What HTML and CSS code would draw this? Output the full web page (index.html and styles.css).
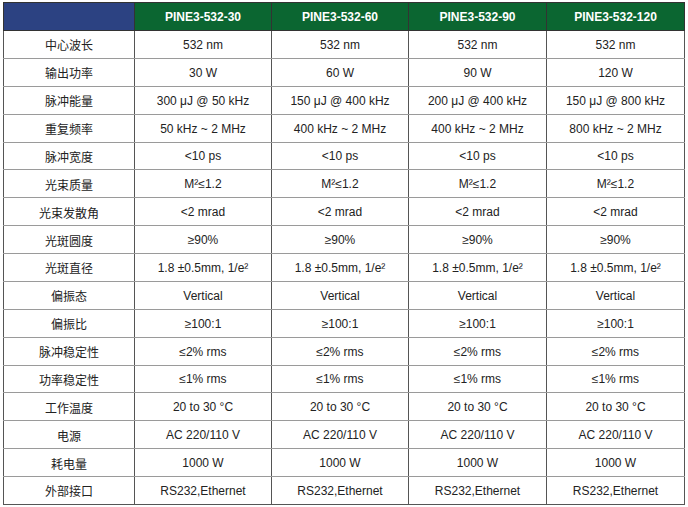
FILE: index.html
```html
<!DOCTYPE html>
<html lang="zh">
<head>
<meta charset="utf-8">
<link rel="stylesheet" href="styles.css">
</head>
<body>
<table class="spec">
  <colgroup>
    <col class="c0"><col class="c1"><col class="c2"><col class="c3"><col class="c4">
  </colgroup>
  <thead>
    <tr>
      <th class="corner"></th>
      <th>PINE3-532-30</th>
      <th>PINE3-532-60</th>
      <th>PINE3-532-90</th>
      <th>PINE3-532-120</th>
    </tr>
  </thead>
  <tbody>
    <tr><td class="lbl">中心波长</td><td>532 nm</td><td>532 nm</td><td>532 nm</td><td>532 nm</td></tr>
    <tr><td class="lbl">输出功率</td><td>30 W</td><td>60 W</td><td>90 W</td><td>120 W</td></tr>
    <tr><td class="lbl">脉冲能量</td><td>300 μJ @ 50 kHz</td><td>150 μJ @ 400 kHz</td><td>200 μJ @ 400 kHz</td><td>150 μJ @ 800 kHz</td></tr>
    <tr><td class="lbl">重复频率</td><td>50 kHz ~ 2 MHz</td><td>400 kHz ~ 2 MHz</td><td>400 kHz ~ 2 MHz</td><td>800 kHz ~ 2 MHz</td></tr>
    <tr><td class="lbl">脉冲宽度</td><td>&lt;10 ps</td><td>&lt;10 ps</td><td>&lt;10 ps</td><td>&lt;10 ps</td></tr>
    <tr><td class="lbl">光束质量</td><td>M²≤1.2</td><td>M²≤1.2</td><td>M²≤1.2</td><td>M²≤1.2</td></tr>
    <tr><td class="lbl">光束发散角</td><td>&lt;2 mrad</td><td>&lt;2 mrad</td><td>&lt;2 mrad</td><td>&lt;2 mrad</td></tr>
    <tr><td class="lbl">光斑圆度</td><td>≥90%</td><td>≥90%</td><td>≥90%</td><td>≥90%</td></tr>
    <tr><td class="lbl">光斑直径</td><td>1.8 ±0.5mm, 1/e²</td><td>1.8 ±0.5mm, 1/e²</td><td>1.8 ±0.5mm, 1/e²</td><td>1.8 ±0.5mm, 1/e²</td></tr>
    <tr><td class="lbl">偏振态</td><td>Vertical</td><td>Vertical</td><td>Vertical</td><td>Vertical</td></tr>
    <tr><td class="lbl">偏振比</td><td>≥100:1</td><td>≥100:1</td><td>≥100:1</td><td>≥100:1</td></tr>
    <tr><td class="lbl">脉冲稳定性</td><td>≤2% rms</td><td>≤2% rms</td><td>≤2% rms</td><td>≤2% rms</td></tr>
    <tr><td class="lbl">功率稳定性</td><td>≤1% rms</td><td>≤1% rms</td><td>≤1% rms</td><td>≤1% rms</td></tr>
    <tr><td class="lbl">工作温度</td><td>20 to 30 °C</td><td>20 to 30 °C</td><td>20 to 30 °C</td><td>20 to 30 °C</td></tr>
    <tr><td class="lbl">电源</td><td>AC 220/110 V</td><td>AC 220/110 V</td><td>AC 220/110 V</td><td>AC 220/110 V</td></tr>
    <tr><td class="lbl">耗电量</td><td>1000 W</td><td>1000 W</td><td>1000 W</td><td>1000 W</td></tr>
    <tr><td class="lbl">外部接口</td><td>RS232,Ethernet</td><td>RS232,Ethernet</td><td>RS232,Ethernet</td><td>RS232,Ethernet</td></tr>
  </tbody>
</table>
</body>
</html>
```

FILE: styles.css
```css
html, body {
  margin: 0;
  padding: 0;
  background: #ffffff;
}
body {
  padding: 2px 0 0 3px;
  font-family: "Liberation Sans", Arial, "Noto Sans CJK SC", sans-serif;
  color: #222222;
}
.spec {
  border-collapse: collapse;
  table-layout: fixed;
  width: 681px;
}
.c0 { width: 131px; }
.c1 { width: 137px; }
.c2 { width: 137px; }
.c3 { width: 138px; }
.c4 { width: 138px; }
.spec th {
  height: 27px;
  padding: 0;
  background: #0b6631;
  color: #ffffff;
  font-size: 12px;
  font-weight: bold;
  text-align: center;
  vertical-align: middle;
  border: 1px solid #333333;
}
.spec th.corner {
  background: #2c4282;
}
.spec td {
  height: 25.88px;
  padding: 1px 0 0 0;
  font-size: 12px;
  text-align: center;
  vertical-align: middle;
  border-top: 1px solid #9a9a9a;
  border-bottom: 1px solid #9a9a9a;
  border-left: 1px solid #555555;
  border-right: 1px solid #555555;
}
.spec td.lbl {
  font-family: "Noto Sans CJK SC", sans-serif;
  font-size: 12px;
}
.spec tbody tr:last-child td {
  border-bottom: 1px solid #555555;
}
```
